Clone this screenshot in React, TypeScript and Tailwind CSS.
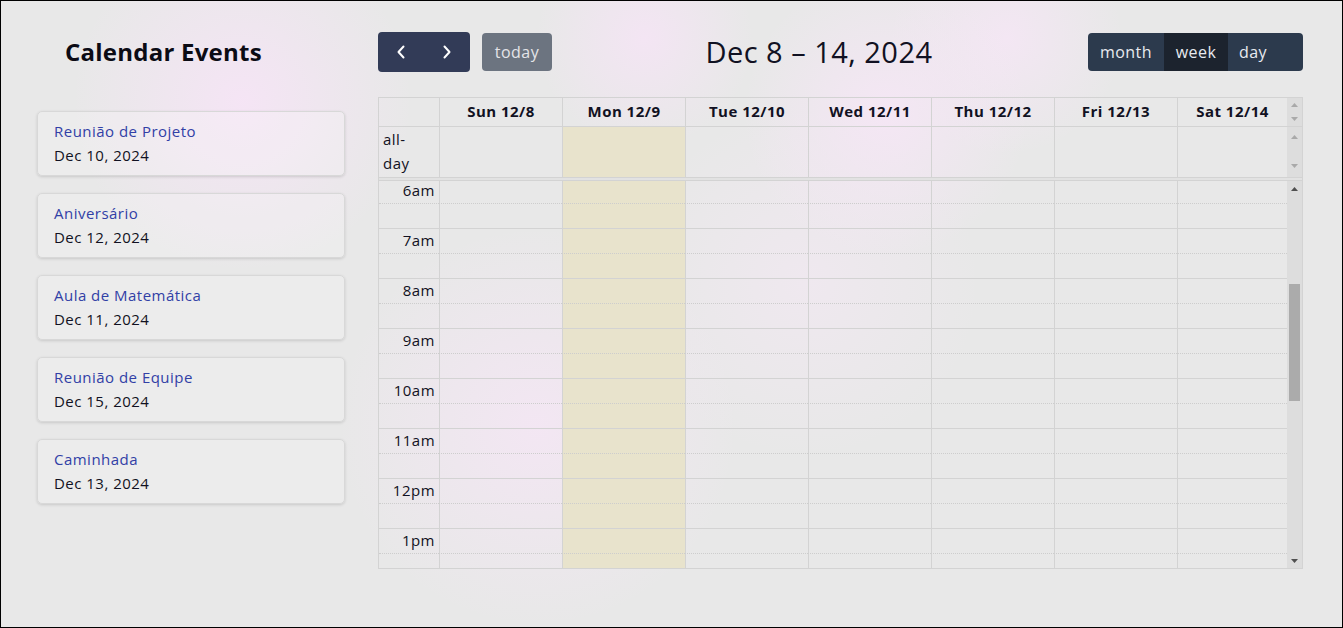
const events = [
  { title: 'Reunião de Projeto', date: 'Dec 10, 2024' },
  { title: 'Aniversário', date: 'Dec 12, 2024' },
  { title: 'Aula de Matemática', date: 'Dec 11, 2024' },
  { title: 'Reunião de Equipe', date: 'Dec 15, 2024' },
  { title: 'Caminhada', date: 'Dec 13, 2024' },
];

const days = ['Sun 12/8', 'Mon 12/9', 'Tue 12/10', 'Wed 12/11', 'Thu 12/12', 'Fri 12/13', 'Sat 12/14'];
const TODAY = 1;

// only the hours that are in view (scrolled to 6am)
const hours = ['6am', '7am', '8am', '9am', '10am', '11am', '12pm', '1pm'];

const cols = 'grid grid-cols-[60px_repeat(6,123px)_1fr] flex-1';

function Chevron({ dir }: { dir: 'left' | 'right' }) {
  return (
    <svg width="10" height="16" viewBox="0 0 10 16" fill="none" stroke="currentColor" strokeWidth="2" strokeLinecap="round" strokeLinejoin="round">
      {dir === 'left' ? <polyline points="7.5,2.5 2.5,8 7.5,13.5" /> : <polyline points="2.5,2.5 7.5,8 2.5,13.5" />}
    </svg>
  );
}

function Arrow({ up, dark }: { up?: boolean; dark?: boolean }) {
  return (
    <svg width="7" height="4" viewBox="0 0 7 4" className={dark ? 'text-[#505050]' : 'text-[#a9a9a9]'}>
      <polygon points={up ? '0,4 3.5,0 7,4' : '0,0 7,0 3.5,4'} fill="currentColor" />
    </svg>
  );
}

function Scrollbar({ dark, pad, thumb }: { dark?: boolean; pad: string; thumb?: boolean }) {
  return (
    <div className={`w-[15px] shrink-0 bg-[#dddddd] flex flex-col items-center justify-between ${pad} relative`}>
      <Arrow up dark={dark} />
      {thumb && <div className="absolute left-[2px] right-[2px] top-[103px] h-[117px] bg-[#ababab]" />}
      <Arrow dark={dark} />
    </div>
  );
}

function Toolbar() {
  return (
    <div className="flex items-center justify-between h-[40px]">
      <div className="flex items-center">
        <div className="flex h-[40px] rounded-[4px] bg-[#323b57] text-white overflow-hidden">
          <button className="w-[46px] flex items-center justify-center"><Chevron dir="left" /></button>
          <button className="w-[46px] flex items-center justify-center"><Chevron dir="right" /></button>
        </div>
        <button className="ml-[12px] h-[38px] w-[70px] rounded-[4px] bg-[#6c7480] text-[#e4e4e8] text-[16px]">today</button>
      </div>
      <h2 className="text-[29px] text-[#111122] pr-[2px]">Dec 8 – 14, 2024</h2>
      <div className="flex h-[38px] rounded-[4px] overflow-hidden bg-[#2c3a4d] text-[#e8eaf0] text-[16px]">
        <button className="w-[76px]">month</button>
        <button className="w-[64px] bg-[#1c232e]">week</button>
        <button className="w-[75px] text-left pl-[11px]">day</button>
      </div>
    </div>
  );
}

function CalendarGrid() {
  return (
    <div className="mt-[25px] border border-[#d3d3d3] text-[15px] text-[#111122]">
      {/* Header */}
      <div className="flex h-[29px] border-b border-[#d3d3d3]">
        <div className={cols}>
          <div />
          {days.map(d => (
            <div key={d} className="border-l border-[#d3d3d3] flex items-center justify-center font-bold pb-[2px]">{d}</div>
          ))}
        </div>
        <Scrollbar pad="py-[5px]" />
      </div>

      {/* All-day */}
      <div className="flex h-[51px] border-b border-[#d3d3d3]">
        <div className={cols}>
          <div className="px-[4px] leading-[24px]"><span className="block w-[36px]">all-day</span></div>
          {days.map((d, i) => (
            <div key={d} className={`border-l border-[#d3d3d3] ${i === TODAY ? 'bg-[#e8e3cc]' : ''}`} />
          ))}
        </div>
        <Scrollbar pad="pt-[8px] pb-[9px]" />
      </div>
      <div className="h-[2px] bg-[#e2e2e2] border-b border-[#d3d3d3] box-content" />

      {/* Time grid */}
      <div className="flex h-[387px]">
        <div className="flex-1 overflow-hidden">
          <div className="grid grid-cols-[60px_repeat(6,123px)_1fr] -mt-[2px]">
            {hours.map(h =>
              [0, 1].map(half => {
                const line = half === 0
                  ? 'border-b border-[#cdcdcd] [border-bottom-style:dotted]'
                  : 'border-b border-[#d3d3d3]';
                return [
                  <div key={`${h}-${half}-l`} className={`h-[25px] ${line} text-right pr-[4px] leading-[23px]`}>
                    {half === 0 ? h : ''}
                  </div>,
                  ...days.map((d, i) => (
                    <div
                      key={`${h}-${half}-${d}`}
                      className={`h-[25px] ${line} border-l border-l-[#d3d3d3] ${i === TODAY ? 'bg-[#e8e3cc]' : ''}`}
                    />
                  )),
                ];
              })
            )}
          </div>
        </div>
        <Scrollbar dark thumb pad="pt-[6px] pb-[5px]" />
      </div>
    </div>
  );
}

export default function App() {
  return (
    <div
      className="h-[628px] border border-black overflow-hidden flex pl-[36px] pr-[39px] pt-[31px] font-['Open_Sans',sans-serif] tracking-[0.03em] bg-[#e8e8e8] bg-[radial-gradient(circle_at_18%_16%,rgba(246,228,246,0.9),transparent_14%),radial-gradient(circle_at_48%_6%,rgba(246,228,246,0.8),transparent_12%),radial-gradient(circle_at_66%_18%,rgba(246,230,246,0.9),transparent_14%),radial-gradient(circle_at_75%_6%,rgba(246,230,246,0.8),transparent_10%),radial-gradient(circle_at_40%_68%,rgba(244,230,244,0.9),transparent_22%),radial-gradient(circle_at_60%_45%,rgba(242,232,242,0.7),transparent_20%)]"
    >
      {/* Sidebar */}
      <aside className="w-[308px] shrink-0">
        <h1 className="h-[40px] flex items-center pl-[28px] text-[24px] font-bold text-[#0b0b14] tracking-[0.01em]">Calendar Events</h1>
        <div className="mt-[39px] flex flex-col gap-[17px]">
          {events.map(ev => (
            <div
              key={ev.title}
              className="h-[65px] rounded-[5px] border border-[#d8d8d8] bg-white/20 shadow-[0_1px_3px_rgba(0,0,0,0.14)] px-[16px] pt-[7px]"
            >
              <p className="text-[15px] leading-[24px] text-[#3140a6]">{ev.title}</p>
              <p className="text-[15px] leading-[24px] text-[#111122] font-medium">{ev.date}</p>
            </div>
          ))}
        </div>
      </aside>

      {/* Calendar */}
      <main className="flex-1 ml-[33px]">
        <Toolbar />
        <CalendarGrid />
      </main>
    </div>
  );
}
